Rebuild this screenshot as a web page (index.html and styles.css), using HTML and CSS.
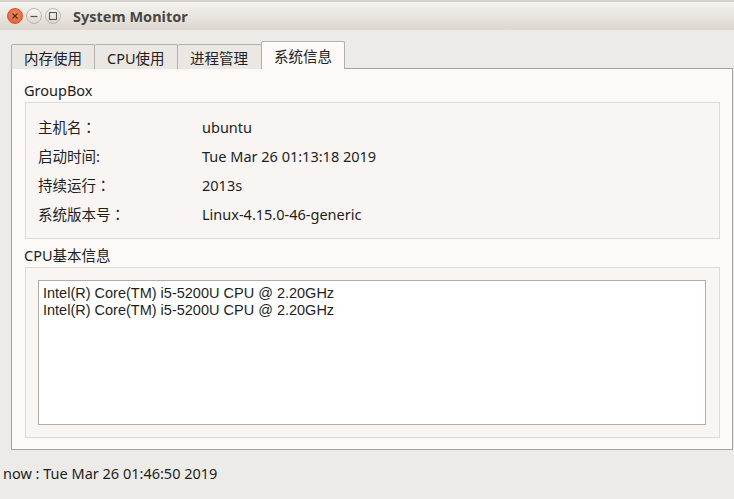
FILE: index.html
```html
<!DOCTYPE html>
<html>
<head>
<meta charset="utf-8">
<link rel="stylesheet" href="styles.css">
</head>
<body>
<div class="window">
  <div class="titlebar">
    <div class="wbtns">
      <span class="wbtn close"><svg width="16" height="16" viewBox="0 0 16 16"><path d="M5.5 5.5 L10.5 10.5 M10.5 5.5 L5.5 10.5" stroke="#4a2a1e" stroke-width="1.2"/></svg></span>
      <span class="wbtn"><svg width="16" height="16" viewBox="0 0 16 16"><path d="M4.5 8.5 H11.5" stroke="#5a5652" stroke-width="1.2"/></svg></span>
      <span class="wbtn"><svg width="16" height="16" viewBox="0 0 16 16"><rect x="4.5" y="4.5" width="7" height="7" fill="none" stroke="#5a5652" stroke-width="1.1"/></svg></span>
    </div>
    <div class="title">System Monitor</div>
  </div>
  <div class="main">
    <div class="tabbar">
      <div class="tab">内存使用</div>
      <div class="tab">CPU使用</div>
      <div class="tab">进程管理</div>
      <div class="tab active">系统信息</div>
    </div>
    <div class="pane">
      <div class="gtitle first">GroupBox</div>
      <div class="frame info">
        <div class="row"><span class="lbl">主机名<span class="colon">：</span></span><span class="val">ubuntu</span></div>
        <div class="row"><span class="lbl">启动时间:</span><span class="val">Tue Mar 26 01:13:18 2019</span></div>
        <div class="row"><span class="lbl">持续运行<span class="colon">：</span></span><span class="val">2013s</span></div>
        <div class="row"><span class="lbl">系统版本号<span class="colon">：</span></span><span class="val">Linux-4.15.0-46-generic</span></div>
      </div>
      <div class="gtitle">CPU基本信息</div>
      <div class="frame cpu">
        <div class="textbox">
          <div class="line">Intel(R) Core(TM) i5-5200U CPU @ 2.20GHz</div>
          <div class="line">Intel(R) Core(TM) i5-5200U CPU @ 2.20GHz</div>
        </div>
      </div>
    </div>
    <div class="status">now : Tue Mar 26 01:46:50 2019</div>
  </div>
</div>
</body>
</html>
```
FILE: styles.css
```css
html, body {
  margin: 0;
  padding: 0;
}
body {
  width: 734px;
  height: 499px;
  overflow: hidden;
  background: #edebe7;
  font-family: "Noto Sans", "Noto Sans CJK SC", sans-serif;
  font-size: 14.5px;
  color: #1e1e1e;
}
.window {
  display: flex;
  flex-direction: column;
  height: 499px;
}
.titlebar {
  height: 28px;
  border-top: 2px solid #d7d1cb;
  background: linear-gradient(#f5f4f1, #ddd6cf);
  display: flex;
  align-items: center;
  padding-left: 7px;
}
.wbtns {
  display: flex;
  gap: 3px;
  align-items: center;
}
.wbtn {
  width: 16px;
  height: 16px;
  border-radius: 50%;
  box-sizing: border-box;
  border: 1px solid #bdb7b0;
  background: linear-gradient(#f7f6f4, #dcd7d1);
  display: flex;
  align-items: center;
  justify-content: center;
}
.wbtn svg {
  display: block;
  flex: none;
}
.wbtn.close {
  border: 1px solid #c9582e;
  background: radial-gradient(circle at 50% 40%, #f58a5c, #e4572a);
}
.title {
  margin-left: 12px;
  font-weight: bold;
  font-size: 14.5px;
  color: #4a4743;
  letter-spacing: 0;
}
.main {
  display: flex;
  flex-direction: column;
  padding: 11px 1px 0 11px;
}
.tabbar {
  display: flex;
  align-items: flex-end;
  height: 28px;
  margin-bottom: -1px;
  position: relative;
  z-index: 1;
}
.tab {
  box-sizing: border-box;
  height: 25px;
  border: 1px solid #b3afa9;
  border-bottom: none;
  border-left: none;
  border-radius: 2px 2px 0 0;
  background: #ebe8e4;
  display: flex;
  align-items: center;
  padding: 0 12px 0 12px;
  color: #222;
}
.tab:first-child {
  border-left: 1px solid #b3afa9;
}
.tab:nth-child(1) { width: 84px; }
.tab:nth-child(2) { width: 83px; }
.tab:nth-child(3) { width: 84px; }
.tab.active {
  width: 84px;
  height: 28px;
  background: #fcf9f6;
  border-left: 1px solid #b3afa9;
  margin-left: -1px;
  padding-left: 12px;
}
.pane {
  box-sizing: border-box;
  height: 382px;
  border: 1px solid #a6a29c;
  background: #fcf9f6;
  padding: 12px 12px 0 13px;
  display: flex;
  flex-direction: column;
}
.gtitle {
  height: 19px;
  line-height: 19px;
  margin-left: -1px;
  color: #1e1e1e;
}
.gtitle + .frame { margin-top: 2px; }
.frame {
  box-sizing: border-box;
  border: 1px solid #dedad5;
  background: #f8f5f2;
}
.info {
  height: 137px;
  padding: 9px 0 0 12px;
  margin-bottom: 7px;
}
.row {
  display: flex;
  height: 29px;
  align-items: center;
}
.lbl {
  width: 164px;
}
.colon {
  font-family: "Noto Sans CJK JP", "Noto Sans CJK SC", sans-serif;
}
.cpu {
  height: 171px;
  padding: 12px 13px 0 12px;
}
.textbox {
  box-sizing: border-box;
  height: 145px;
  background: #ffffff;
  border: 1px solid #b1ada7;
  padding: 4px 4px;
  font-family: "Liberation Sans", "Noto Sans", sans-serif;
  font-size: 14.5px;
}
.line {
  height: 17px;
  line-height: 17px;
}
.status {
  margin-left: -8px;
  margin-top: 13px;
  height: 20px;
  line-height: 20px;
}
```
